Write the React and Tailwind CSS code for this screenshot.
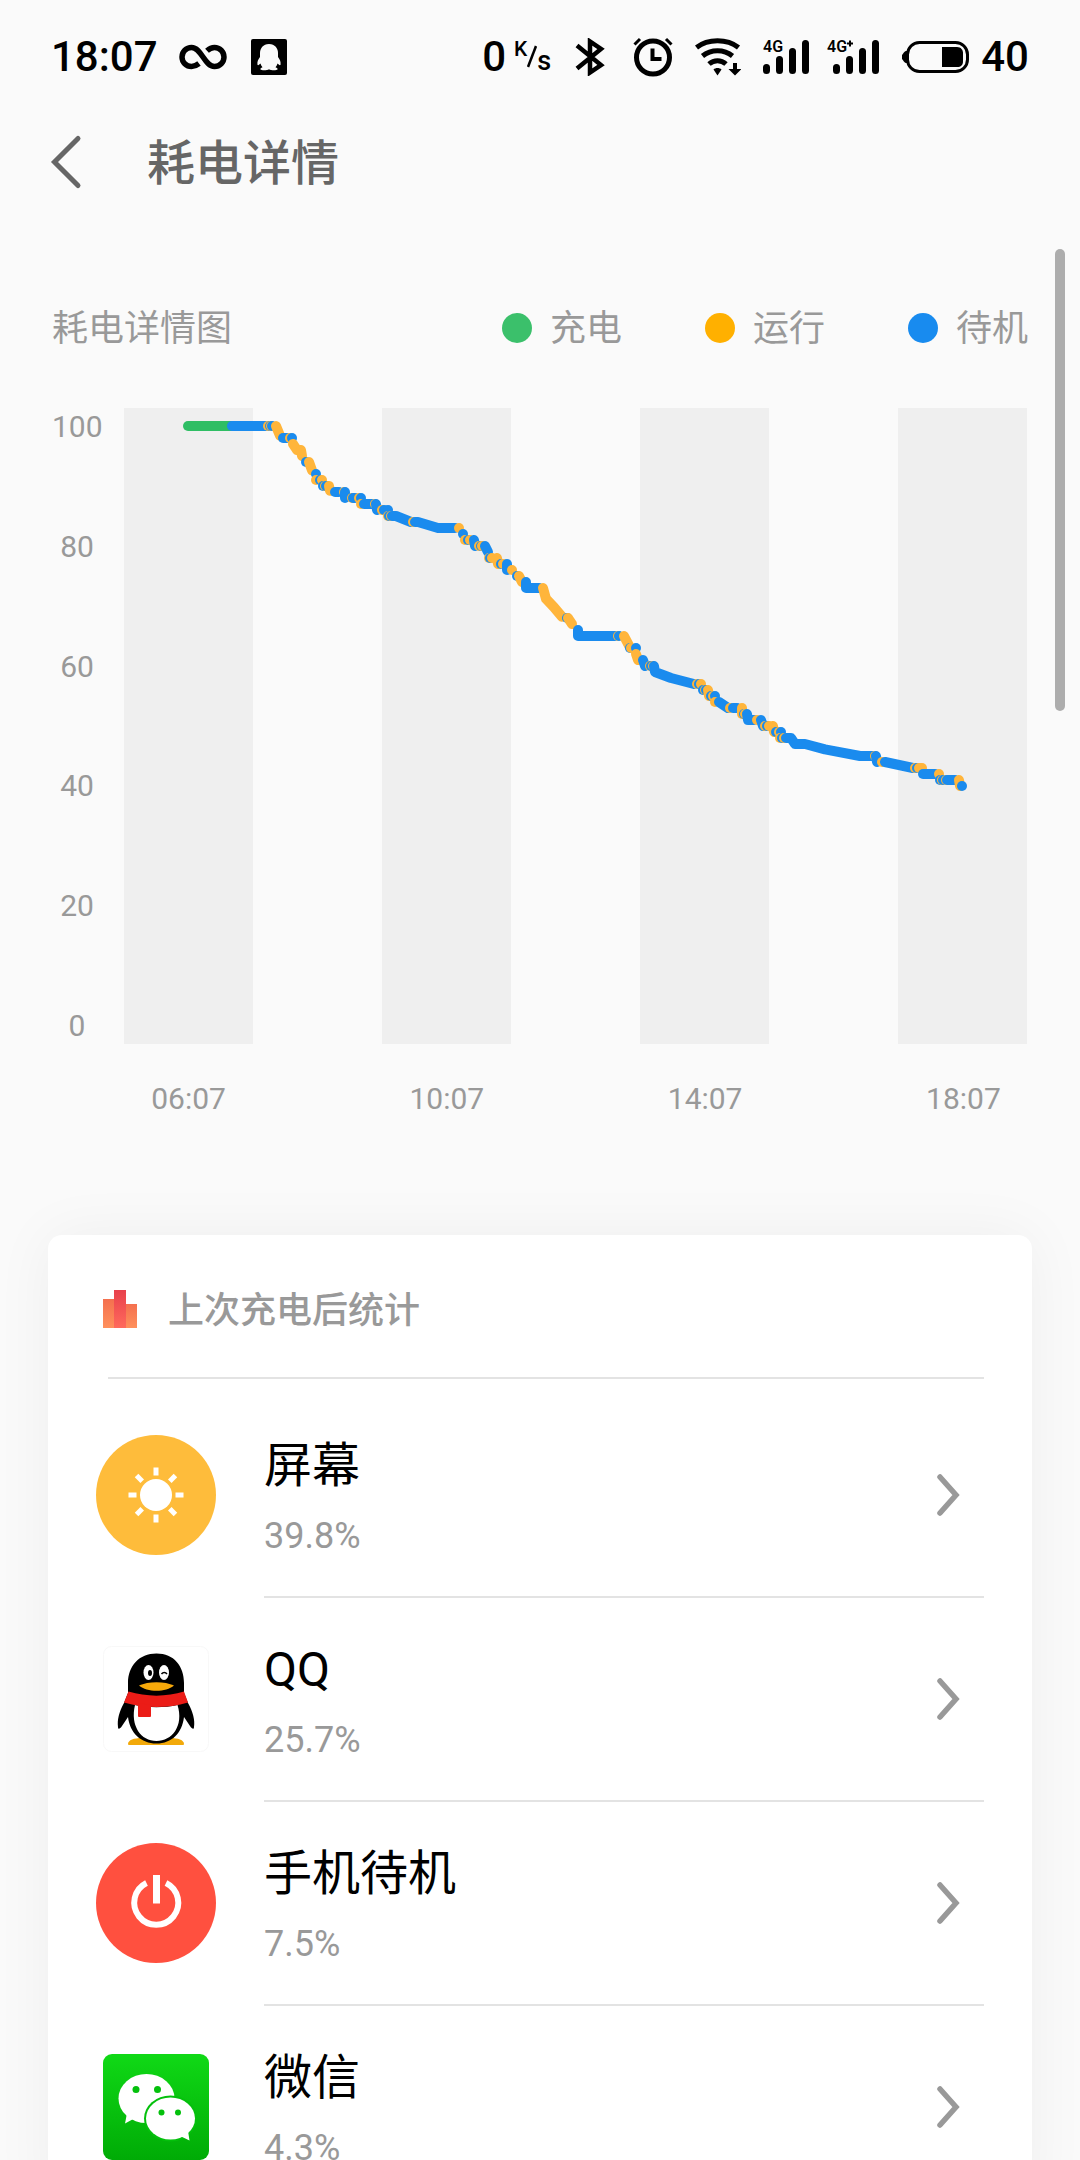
import React, { useId } from 'react';

const STATE_COLORS = {
  charge: '#2fbe64',
  run: '#ffb53b',
  idle: '#1a8bee',
};

const LEGEND = [
  { label: '充电', dot: 'bg-[#3bc06b]' },
  { label: '运行', dot: 'bg-[#ffb000]' },
  { label: '待机', dot: 'bg-[#188bef]' },
];

const LEVELS = [100, 80, 60, 40, 20, 0];
const HOURS = ['06:07', '10:07', '14:07', '18:07'];

// [state, [x, battery level], ...] in drawing order
const HISTORY = [
  ['charge', [64, 100], [108, 100]],
  ['idle', [108, 100], [142, 100]],
  ['run', [144, 100]],
  ['idle', [146, 100]],
  ['run', [147, 100]],
  ['idle', [148, 100]],
  ['run', [152, 100], [156, 98.4]],
  ['idle', [159, 98], [163, 98]],
  ['run', [166, 98]],
  ['idle', [168, 98]],
  ['run', [169, 97], [173, 96]],
  ['run', [177, 96], [178, 95]],
  ['idle', [182, 94]],
  ['run', [185, 94], [188, 92.6]],
  ['idle', [192, 92]],
  ['run', [192, 91]],
  ['idle', [196, 91]],
  ['run', [198, 91]],
  ['idle', [199, 90]],
  ['run', [201, 90]],
  ['idle', [202, 90]],
  ['run', [205, 90], [206, 89.2]],
  ['idle', [211, 89], [215, 89]],
  ['run', [220, 89]],
  ['idle', [221, 89], [221, 88]],
  ['run', [228, 88]],
  ['idle', [229, 88], [231, 88]],
  ['run', [235, 88]],
  ['idle', [237, 88]],
  ['run', [237, 87]],
  ['idle', [240, 87], [248, 87]],
  ['run', [251, 87]],
  ['idle', [252, 87], [253, 86]],
  ['run', [258, 86]],
  ['idle', [260, 86]],
  ['idle', [264, 86]],
  ['run', [264, 85]],
  ['idle', [265, 85]],
  ['run', [267, 85]],
  ['idle', [268, 85], [272, 85], [287, 84]],
  ['run', [289, 84]],
  ['idle', [291, 84], [294, 84], [314, 83], [331, 83]],
  ['run', [335, 83]],
  ['idle', [339, 82]],
  ['run', [341, 81]],
  ['idle', [344, 81]],
  ['run', [346, 81]],
  ['idle', [350, 81], [351, 80]],
  ['run', [355, 80]],
  ['idle', [357, 80]],
  ['run', [358, 80]],
  ['idle', [361, 80], [364, 79]],
  ['run', [365, 78]],
  ['idle', [366, 78]],
  ['run', [368, 78]],
  ['run', [373, 78], [374, 77]],
  ['idle', [377, 77]],
  ['run', [379, 77]],
  ['idle', [383, 77], [383, 76]],
  ['run', [388, 76]],
  ['idle', [393, 75]],
  ['run', [395, 75], [398, 74]],
  ['idle', [402, 74], [402, 73], [415, 73]],
  ['run', [419, 73], [422, 71.2], [430, 69.8], [438, 68.2]],
  ['idle', [443, 68]],
  ['run', [444, 68], [448, 67]],
  ['idle', [454, 66], [454, 65], [491, 65]],
  ['run', [494, 65]],
  ['idle', [495, 65]],
  ['run', [500, 65], [505, 63.4]],
  ['idle', [506, 63]],
  ['run', [507, 63]],
  ['idle', [512, 63]],
  ['run', [512, 62], [514, 61]],
  ['idle', [519, 61], [521, 60]],
  ['run', [526, 60]],
  ['idle', [527, 60]],
  ['run', [529, 60]],
  ['idle', [530, 60], [531, 59], [547, 58], [570, 57]],
  ['run', [573, 57]],
  ['idle', [575, 57]],
  ['run', [577, 57]],
  ['idle', [579, 56]],
  ['run', [581, 56]],
  ['idle', [582, 56]],
  ['run', [584, 56], [585, 55]],
  ['idle', [587, 55]],
  ['run', [589, 55]],
  ['idle', [591, 55]],
  ['run', [591, 54]],
  ['idle', [595, 54], [604, 53]],
  ['run', [606, 53]],
  ['idle', [609, 53], [613, 53]],
  ['run', [618, 53], [618, 52]],
  ['idle', [620, 52]],
  ['run', [621, 52]],
  ['idle', [623, 52], [624, 51], [630, 51]],
  ['run', [633, 51]],
  ['idle', [637, 51], [639, 50]],
  ['run', [641, 50]],
  ['idle', [643, 50]],
  ['run', [645, 50]],
  ['run', [649, 50], [650, 49]],
  ['idle', [652, 49]],
  ['run', [655, 49]],
  ['idle', [657, 49]],
  ['run', [656, 48]],
  ['idle', [658, 48]],
  ['run', [660, 48]],
  ['idle', [662, 48], [667, 48], [671, 47], [681, 47], [701, 46.1], [736, 45], [749, 45]],
  ['run', [751, 45]],
  ['idle', [752, 45], [753, 44]],
  ['run', [758, 44]],
  ['idle', [761, 44], [789, 43]],
  ['run', [791, 43]],
  ['idle', [793, 43]],
  ['run', [795, 43], [798, 43]],
  ['idle', [799, 42], [811, 42]],
  ['run', [815, 42]],
  ['idle', [816, 41]],
  ['run', [818, 41]],
  ['idle', [819, 41]],
  ['run', [822, 41]],
  ['idle', [823, 41], [831, 41]],
  ['run', [835, 41], [836, 40]],
  ['idle', [838, 40]],
];

const toPath = (points) => {
  const coords = points.map(([x, level]) => `${x} ${18 + (100 - level) * 6}`);
  // a zero length segment still gets its round caps
  return `M${coords[0]}L${coords.slice(points.length > 1 ? 1 : 0).join('L')}`;
};

const Signal = ({ label, offset }) => (
  <svg className="overflow-visible" width={offset + 46} height="36" viewBox={`0 0 ${offset + 46} 36`} aria-label={label}>
    <text x="0" y="13" fontSize="16" fontWeight="600" fontFamily="Roboto, sans-serif">4G</text>
    {label === '4G+' && <path d="M20 4.500h6M23 1.500v6" stroke="#000" strokeWidth="2" />}
    <g transform={`translate(${offset} 0)`} stroke="#000" strokeWidth="7" strokeLinecap="round">
      <path d="M3.500 28.500v3M16.500 20.500v11M29.500 12.500v19M42.500 4.500v27" />
    </g>
  </svg>
);

const StatusBar = () => (
  <div className="flex h-[114px] items-center justify-between px-[51px] text-[42px] leading-[48px] font-medium text-black">
    <div className="flex items-center">
      <span>18:07</span>
      <svg className="ml-[21px]" width="48" height="26" viewBox="0 0 48 26" fill="none" stroke="#000" strokeWidth="5.500">
        <path d="M20 19.500C17.500 21.500 15.500 22.500 12.500 22.500A9.500 9.500 0 0 1 12.500 3.500C22.500 3.500 25.500 22.500 35.500 22.500A9.500 9.500 0 0 0 35.500 3.500C32.500 3.500 30.500 4.500 28 6.800" />
      </svg>
      <svg className="ml-6" width="36" height="36" viewBox="0 0 36 36">
        <rect width="36" height="36" rx="2" />
        <path
          d="M18 5c-6 0-9 4.500-9 9v4c-2 2.500-3 5-2.500 8 1 .5 2-.5 3-1.500.3 1.500 1 2.700 2 3.700-1.500.5-2.500 1.500-2 2.300 1 1.200 7 1 8.500-.3 1.500 1.300 7.500 1.500 8.500.3.500-.8-.5-1.800-2-2.300 1-1 1.700-2.200 2-3.700 1 1 2 2 3 1.500.5-3-.5-5.500-2.500-8v-4c0-4.500-3-9-9-9z"
          fill="#fafafa"
        />
      </svg>
    </div>
    <div className="flex items-center">
      <span>0</span>
      <span className="ml-2 flex h-9 items-stretch">
        <span className="text-[21px] leading-5">K</span>
        <svg width="10" height="36" viewBox="0 0 10 36">
          <path d="M9 7L1 28" stroke="#000" strokeWidth="2.500" />
        </svg>
        <span className="self-end text-[27px] leading-7">s</span>
      </span>
      <svg className="ml-6" width="30" height="38" viewBox="0 0 30 38" fill="none" stroke="#000" strokeWidth="4.500">
        <path d="M2 7.500L26 27 15 34.500V3.500L26 11 2 30.500" />
      </svg>
      <svg className="ml-7" width="40" height="40" viewBox="0 0 40 40" fill="none" stroke="#000">
        <circle cx="20" cy="20.500" r="16.500" strokeWidth="5" />
        <path d="M19.500 11.500v10.500h9" strokeWidth="4" />
        <path d="M1.500 7.500L7 2M38.500 7.500L33 2" strokeWidth="3" />
      </svg>
      <svg className="ml-[22px]" width="46" height="38" viewBox="0 0 46 38" fill="none" stroke="#000" strokeWidth="5">
        <path d="M1.500 9.500C13 .5 32 .5 43.500 9.500M7.500 18C16 11 29 11 37.500 18M14 26c5-4.500 12-4.500 17 0" />
        <path d="M18.500 31.500c2-2 6-2 8 0l-4 6z" fill="#000" stroke="none" />
        <path d="M38 25h4v6h4.500L40 37.500 33.500 31H38z" fill="#000" stroke="none" />
      </svg>
      <span className="ml-[22px] flex gap-[18px]">
        <Signal label="4G" offset={0} />
        <Signal label="4G+" offset={6} />
      </span>
      <svg className="ml-[22px]" width="68" height="32" viewBox="0 0 68 32">
        <path d="M6 10c-3 0-3 2-5 4v4c2 2 2 4 5 4z" />
        <rect x="6.500" y="1.500" width="60" height="29" rx="12" fill="none" stroke="#000" strokeWidth="3" />
        <path d="M41 6h15c4 0 6 3 6 6v8c0 4-2 6-6 6H41z" />
      </svg>
      <span className="ml-3">40</span>
    </div>
  </div>
);

const Header = () => (
  <header className="flex h-24 items-center px-12 text-[#666]">
    <button type="button" aria-label="返回" className="flex">
      <svg width="36" height="56" viewBox="0 0 36 56" fill="none" stroke="currentColor" strokeWidth="5" strokeLinecap="round">
        <path d="M30 4.500L6.500 28 30 51.500" />
      </svg>
    </button>
    <h1 className="ml-[63px] pt-1 text-[48px] leading-[72px] font-medium">耗电详情</h1>
  </header>
);

const BatteryChart = () => (
  <section className="px-[52px] pt-[90px] text-[#999]">
    <div className="flex items-center justify-between text-[36px] leading-[54px]">
      <h2 className="pt-0.5">耗电详情图</h2>
      <ul className="flex gap-[83px]">
        {LEGEND.map(({ label, dot }) => (
          <li key={label} className="flex items-center gap-[18px]">
            <span className={`size-[30px] rounded-full ${dot}`} />
            <span className="pt-0.5">{label}</span>
          </li>
        ))}
      </ul>
    </div>
    <div className="mt-[52px] flex gap-[22px] text-[30px] leading-9">
      <div className="flex w-[50px] flex-col justify-between pt-px text-center">
        {LEVELS.map((level) => (
          <span key={level}>{level}</span>
        ))}
      </div>
      <svg className="min-w-0 flex-1" viewBox="0 0 904 636" role="img" aria-label="耗电详情图">
        {HOURS.map((hour, i) => (
          <rect key={hour} x={i * 258} width="129" height="636" fill="#efefef" />
        ))}
        <g fill="none" strokeWidth="10" strokeLinecap="round" strokeLinejoin="round">
          {HISTORY.map(([state, ...points], i) => (
            <path key={i} d={toPath(points)} stroke={STATE_COLORS[state]} />
          ))}
        </g>
      </svg>
    </div>
    <div className="mt-[31px] flex justify-between pl-[72px] text-center text-[30px] leading-[48px]">
      {HOURS.map((hour) => (
        <span key={hour} className="w-1/7">{hour}</span>
      ))}
    </div>
  </section>
);

const ScreenIcon = () => (
  <svg className="size-[120px]" viewBox="0 0 120 120">
    <circle cx="60" cy="60" r="60" fill="#febc3b" />
    <circle cx="60" cy="60" r="16" fill="#fff" />
    {[0, 45, 90, 135, 180, 225, 270, 315].map((angle) => (
      <rect key={angle} x="57.500" y="32.500" width="5" height="8" fill="#fff" transform={`rotate(${angle} 60 60)`} />
    ))}
  </svg>
);

const QQIcon = () => (
  <svg className="size-[120px]" viewBox="0 0 120 120">
    <rect x="7.500" y="7.500" width="105" height="105" rx="8" fill="#fff" stroke="#f8f8f8" />
    <path d="M32 105c0-4 6-6 14-6h28c8 0 14 2 14 6 0 1-1 1-2 1H34c-1 0-2 0-2-1z" fill="#f2a90a" />
    <path d="M60.500 14.500C43 14.500 32 27 32 44v10L28 64c-5 9-7 17-6 24 0 3 2 2 4-1 2-3 4-6 6-9 2 16 13 26.500 28.500 26.500S86 94 88 78c2 3 4 6 6 9 2 3 4 4 4 1 1-7-1-15-6-24l-4-10V44c0-17-10-29.500-27.500-29.500z" fill="#000" />
    <path d="M39 66c-5 21 6 36 21.500 36S88 87 81.500 66c-13 3-29 3-42.500 0z" fill="#fff" />
    <path d="M32.500 52.500c18 5.500 38 5.500 55.500 0l4 11c-20 6-43 6-64 0z" fill="#eb1c17" />
    <path d="M42 64l13 2v11c0 1-1 1-2 1H44c-1 0-2 0-2-1z" fill="#eb1c17" />
    <ellipse cx="52.500" cy="33.500" rx="5" ry="7.500" fill="#fff" />
    <ellipse cx="68" cy="33.500" rx="5" ry="7.500" fill="#fff" />
    <ellipse cx="54" cy="34" rx="2" ry="3" fill="#000" />
    <path d="M65.500 35c1.500-2 4-2 5.500 0" fill="none" stroke="#000" strokeWidth="1.500" />
    <path d="M43 46.500c9-4.500 26-4.500 35 0-8 7-27 7-35 0z" fill="#f7a90a" />
  </svg>
);

const StandbyIcon = () => (
  <svg className="size-[120px]" viewBox="0 0 120 120">
    <circle cx="60" cy="60" r="60" fill="#ff503f" />
    <path d="M50.500 40A22 22 0 1 0 70 40" fill="none" stroke="#fff" strokeWidth="6" />
    <path d="M60.500 32v28.500" stroke="#fff" strokeWidth="7" />
  </svg>
);

const WeChatIcon = () => {
  const id = useId();
  return (
    <svg className="size-[120px]" viewBox="0 0 120 120">
      <linearGradient id={id} x1="0" y1="0" x2="0" y2="1">
        <stop offset="0" stopColor="#10d916" />
        <stop offset="1" stopColor="#00ab06" />
      </linearGradient>
      <rect x="7" y="7" width="106" height="106" rx="9" fill={`url(#${id})`} />
      <ellipse cx="50.500" cy="51.500" rx="28" ry="24.500" fill="#fff" />
      <path d="M31 66l-2 10.500L41 70z" fill="#fff" />
      <ellipse cx="74.500" cy="71.500" rx="26.500" ry="23" fill="#04c00c" />
      <ellipse cx="74.500" cy="71.500" rx="24.500" ry="21" fill="#fff" />
      <path d="M92 84l1.500 9.500L82 88z" fill="#fff" />
      <g fill="#04c00c">
        <circle cx="40" cy="42.500" r="3.500" />
        <circle cx="61.500" cy="42.500" r="3.500" />
        <circle cx="65.500" cy="65.500" r="3" />
        <circle cx="82" cy="65.500" r="3" />
      </g>
    </svg>
  );
};

const StatsIcon = () => {
  const id = useId();
  return (
    <svg width="34" height="38" viewBox="0 0 34 38">
      <linearGradient id={`${id}side`} x1="0" y1="0" x2="0" y2="1">
        <stop offset="0" stopColor="#f4704f" />
        <stop offset="1" stopColor="#ff905c" />
      </linearGradient>
      <linearGradient id={`${id}mid`} x1="0" y1="0" x2="0" y2="1">
        <stop offset="0" stopColor="#e8414c" />
        <stop offset="1" stopColor="#ff6a5c" />
      </linearGradient>
      <rect y="9" width="11" height="29" fill={`url(#${id}side)`} />
      <rect x="23" y="14" width="11" height="24" fill={`url(#${id}side)`} />
      <rect x="11" width="12" height="38" fill={`url(#${id}mid)`} />
    </svg>
  );
};

const APPS = [
  { name: '屏幕', percent: '39.8%', Icon: ScreenIcon },
  { name: 'QQ', percent: '25.7%', Icon: QQIcon },
  { name: '手机待机', percent: '7.5%', Icon: StandbyIcon },
  { name: '微信', percent: '4.3%', Icon: WeChatIcon },
];

const UsageRow = ({ name, percent, Icon }) => (
  <li>
    <a href="#" className="flex h-[204px] gap-12">
      <span className="flex items-center pb-0.5">
        <Icon />
      </span>
      <span className="flex flex-1 items-center justify-between border-b-2 border-[#e3e3e3] pr-6">
        <span className="flex flex-col pt-2.5">
          <span className="text-[48px] leading-[72px] text-black">{name}</span>
          <span className="text-[36px] leading-[68px] text-[#999]">{percent}</span>
        </span>
        <svg width="24" height="44" viewBox="0 0 24 44" fill="none" stroke="#999" strokeWidth="5.500" strokeLinecap="round">
          <path d="M4 4l16 18L4 40" />
        </svg>
      </span>
    </a>
  </li>
);

const UsageCard = () => (
  <section className="mx-12 mt-28 rounded-[14px] bg-white px-12 shadow-[0_0_60px_rgba(0,0,0,0.05)]">
    <div className="ml-3 flex h-36 items-center gap-[31px] border-b-2 border-[#e3e3e3] pt-2">
      <span className="-ml-[5px] pb-0.5">
        <StatsIcon />
      </span>
      <h2 className="pt-0.5 text-[36px] leading-[54px] font-medium text-[#999]">上次充电后统计</h2>
    </div>
    <ul className="pt-[15px]">
      {APPS.map((app) => (
        <UsageRow key={app.name} {...app} />
      ))}
    </ul>
  </section>
);

export default function App() {
  return (
    <div className="relative h-screen overflow-hidden bg-[#fafafa] font-[Roboto,'Noto_Sans_CJK_SC',sans-serif]">
      <StatusBar />
      <Header />
      <main>
        <BatteryChart />
        <UsageCard />
      </main>
      {/* scroll indicator */}
      <div className="absolute top-[249px] right-[15px] h-[462px] w-[10px] rounded-full bg-[#adadad]" />
    </div>
  );
}
